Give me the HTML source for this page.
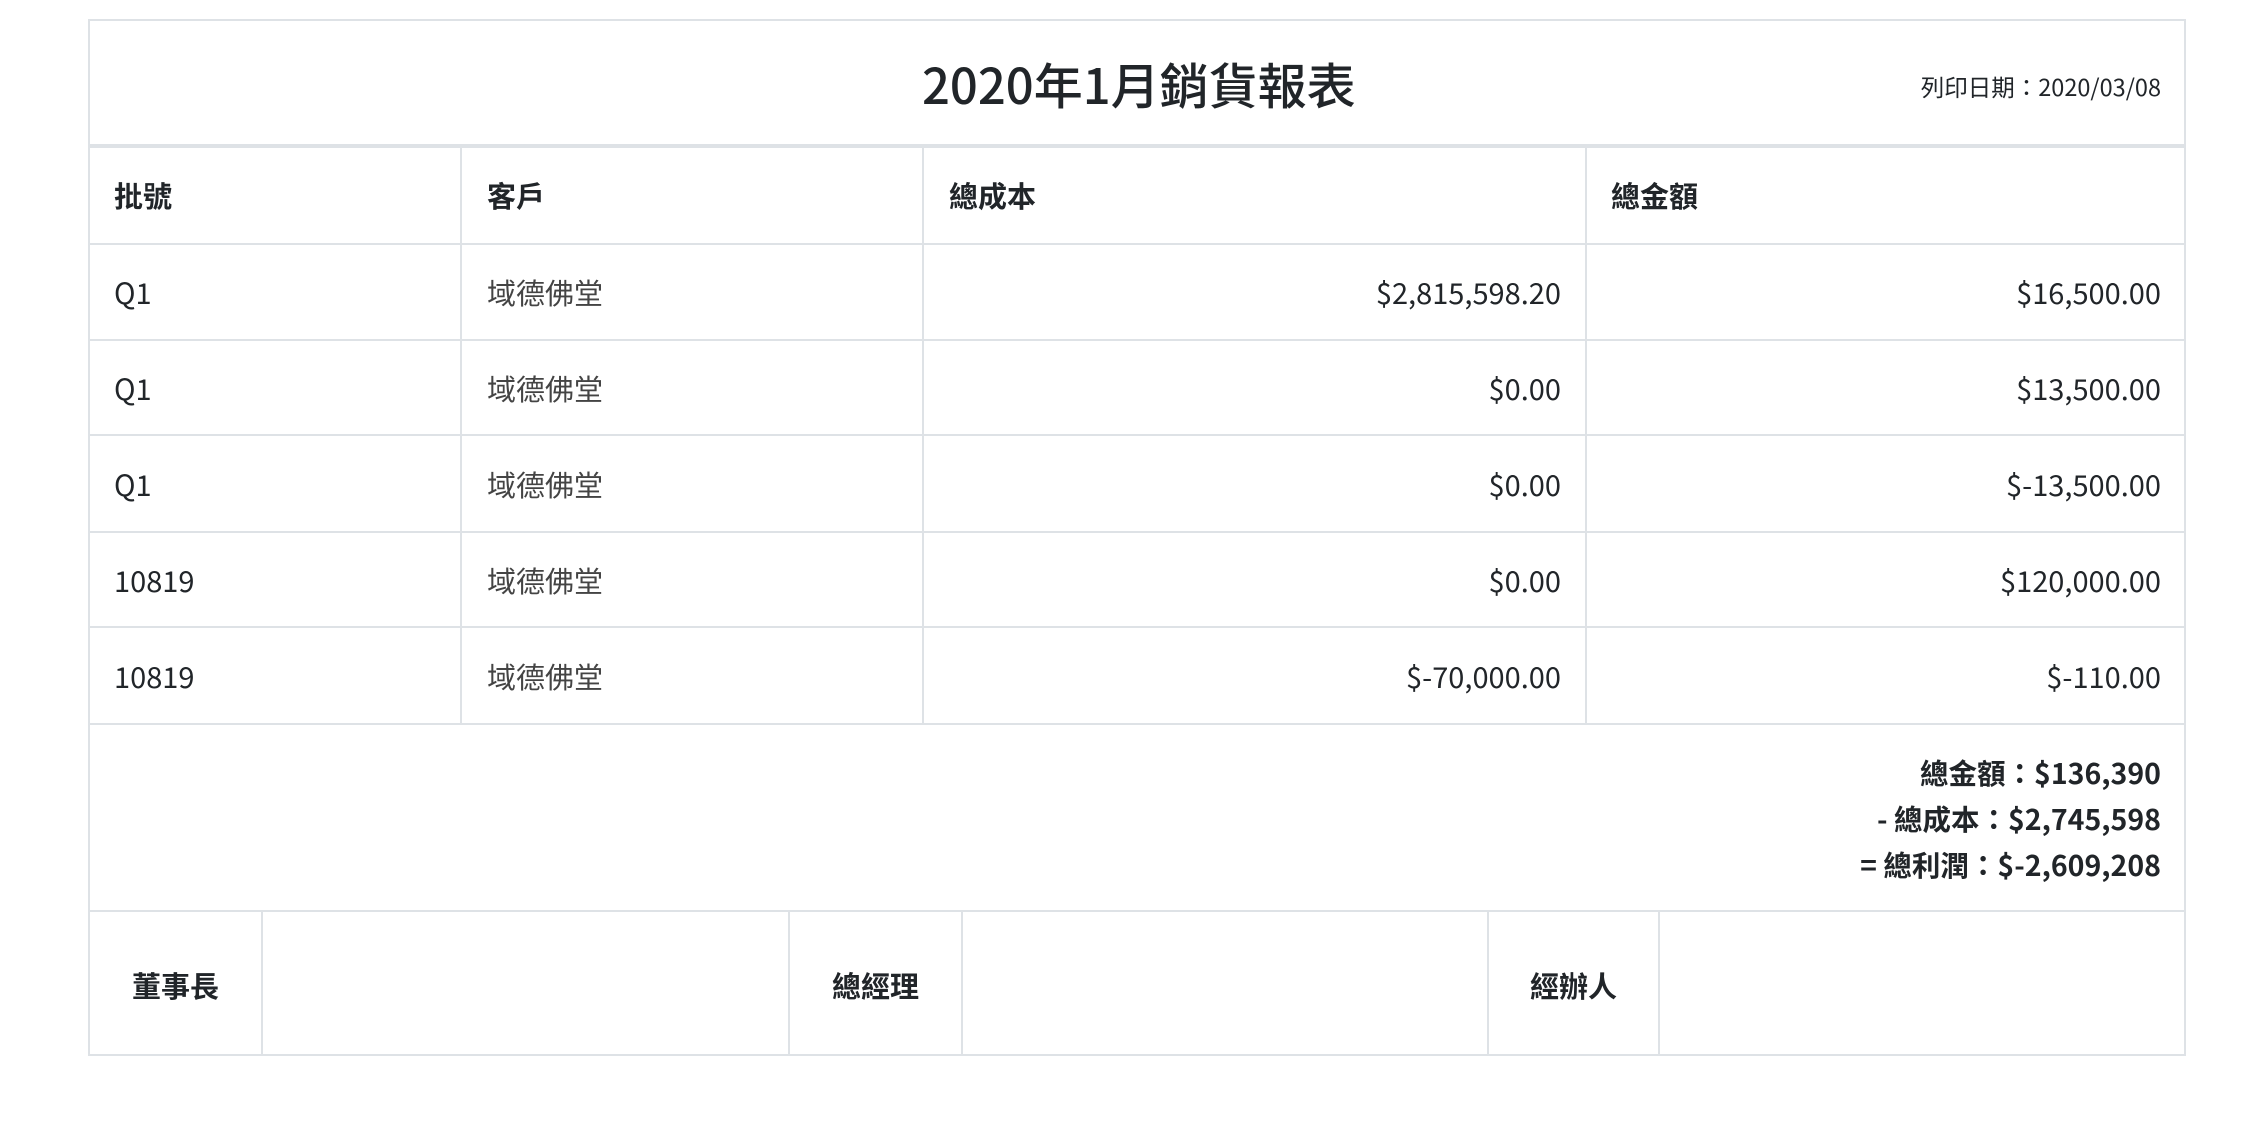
<!DOCTYPE html>
<html><head><meta charset="utf-8"><style>
*{margin:0;padding:0;box-sizing:border-box}
body{width:2260px;height:1145px;background:#fff;position:relative;overflow:hidden;font-family:"Noto Sans CJK TC","Liberation Sans",sans-serif;color:#212529}
.h{position:absolute;left:89px;width:2097px;height:2px;background:#dee2e6}
.v{position:absolute;width:2px;background:#dee2e6}
.t{position:absolute;font-size:29px;line-height:40px;white-space:nowrap}
.r{text-align:right}
.b{font-weight:bold}
</style></head><body>
<div class="h" style="top:19px"></div>
<div class="h" style="top:144px;height:4px"></div>
<div class="h" style="top:243px"></div>
<div class="h" style="top:339px"></div>
<div class="h" style="top:434px"></div>
<div class="h" style="top:531px"></div>
<div class="h" style="top:626px"></div>
<div class="h" style="top:723px"></div>
<div class="h" style="top:910px"></div>
<div class="h" style="top:1054px"></div>
<div class="v" style="left:88px;top:19px;height:1037px"></div>
<div class="v" style="left:2184px;top:19px;height:1037px"></div>
<div class="v" style="left:460px;top:146px;height:578px"></div>
<div class="v" style="left:922px;top:146px;height:578px"></div>
<div class="v" style="left:1585px;top:146px;height:578px"></div>
<div class="v" style="left:261px;top:911px;height:144px"></div>
<div class="v" style="left:788px;top:911px;height:144px"></div>
<div class="v" style="left:961px;top:911px;height:144px"></div>
<div class="v" style="left:1487px;top:911px;height:144px"></div>
<div class="v" style="left:1658px;top:911px;height:144px"></div>

<div class="t" style="left:922px;top:52px;font-size:49px;line-height:64px;font-weight:500">2020年1月銷貨報表</div>
<div class="t r" style="right:99px;top:70px;font-size:23.5px;line-height:32px">列印日期：2020/03/08</div>

<div class="t b" style="left:114px;top:175px">批號</div>
<div class="t b" style="left:487px;top:175px">客戶</div>
<div class="t b" style="left:949px;top:175px">總成本</div>
<div class="t b" style="left:1611px;top:175px">總金額</div>

<div class="t" style="left:114px;top:272px">Q1</div>
<div class="t" style="left:487px;top:272px;color:#444">域德佛堂</div>
<div class="t r" style="right:699px;top:272px">$2,815,598.20</div>
<div class="t r" style="right:99px;top:272px">$16,500.00</div>

<div class="t" style="left:114px;top:368px">Q1</div>
<div class="t" style="left:487px;top:368px;color:#444">域德佛堂</div>
<div class="t r" style="right:699px;top:368px">$0.00</div>
<div class="t r" style="right:99px;top:368px">$13,500.00</div>

<div class="t" style="left:114px;top:464px">Q1</div>
<div class="t" style="left:487px;top:464px;color:#444">域德佛堂</div>
<div class="t r" style="right:699px;top:464px">$0.00</div>
<div class="t r" style="right:99px;top:464px">$-13,500.00</div>

<div class="t" style="left:114px;top:560px">10819</div>
<div class="t" style="left:487px;top:560px;color:#444">域德佛堂</div>
<div class="t r" style="right:699px;top:560px">$0.00</div>
<div class="t r" style="right:99px;top:560px">$120,000.00</div>

<div class="t" style="left:114px;top:656px">10819</div>
<div class="t" style="left:487px;top:656px;color:#444">域德佛堂</div>
<div class="t r" style="right:699px;top:656px">$-70,000.00</div>
<div class="t r" style="right:99px;top:656px">$-110.00</div>

<div class="t r b" style="right:99px;top:753px;font-size:28.5px">總金額：$136,390</div>
<div class="t r b" style="right:99px;top:799px;font-size:28.5px">- 總成本：$2,745,598</div>
<div class="t r b" style="right:99px;top:845px;font-size:28.5px">= 總利潤：$-2,609,208</div>

<div class="t b" style="left:89px;width:173px;text-align:center;top:965px">董事長</div>
<div class="t b" style="left:789px;width:173px;text-align:center;top:965px">總經理</div>
<div class="t b" style="left:1488px;width:171px;text-align:center;top:965px">經辦人</div>
</body></html>
